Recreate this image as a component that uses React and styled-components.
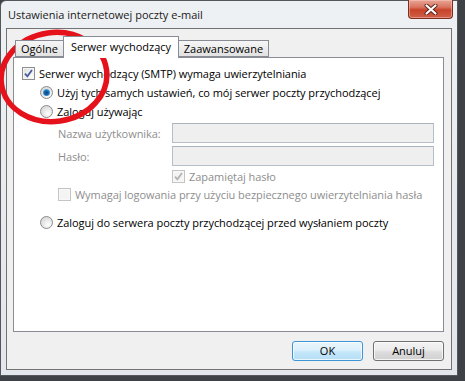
import React from 'react';
import styled, { createGlobalStyle } from 'styled-components';

const GlobalStyle = createGlobalStyle`
  html, body {
    margin: 0;
    padding: 0;
  }
  body {
    width: 465px;
    height: 381px;
    overflow: hidden;
    background: #3e4145;
    font-family: "Open Sans", "Noto Sans", sans-serif;
    font-size: 11px;
  }
`;

const Screen = styled.div`
  position: relative;
  width: 465px;
  height: 381px;
`;

const Window = styled.div`
  width: 458px;
  height: 376px;
  box-sizing: border-box;
  border: 1px solid #53575c;
  border-top-left-radius: 6px;
  background: linear-gradient(to bottom, #eef1f4 0%, #e6eaee 60%, #e3e7eb 100%);
  display: flex;
  flex-direction: column;
`;

const TitleBar = styled.div`
  height: 27px;
  display: flex;
  align-items: flex-start;
  justify-content: space-between;
`;

const Title = styled.span`
  padding: 7px 0 0 7px;
  line-height: 14px;
  font-size: 11px;
  color: #1a1a1a;
`;

const CloseButton = styled.div`
  width: 45px;
  height: 19px;
  box-sizing: border-box;
  margin: -1px 4px 0 0;
  border: 1px solid #7d2c20;
  border-top: none;
  border-radius: 0 0 4px 4px;
  background: linear-gradient(to bottom, #e8a596 0%, #d9735f 40%, #c8432a 55%, #cf6048 100%);
  box-shadow: inset 0 0 0 1px rgba(255, 210, 200, 0.45);
  display: flex;
  align-items: center;
  justify-content: center;
`;

const Client = styled.div`
  flex: 1;
  margin: 0 5px 5px 5px;
  border: 1px solid #737373;
  background: #f0f0f0;
  padding: 7px 7px 8px 6px;
  display: flex;
  flex-direction: column;
`;

const TabRow = styled.div`
  height: 21px;
  display: flex;
  align-items: flex-end;
  padding-left: 2px;
`;

const Tab = styled.div`
  position: relative;
  box-sizing: border-box;
  width: ${p => p.$w}px;
  height: ${p => (p.$active ? 22 : 17)}px;
  margin-bottom: ${p => (p.$active ? -1 : 0)}px;
  margin-left: ${p => (p.$first ? 0 : -1)}px;
  z-index: ${p => (p.$active ? 2 : 1)};
  border: 1px solid #898c95;
  border-bottom: ${p => (p.$active ? 'none' : '1px solid #898c95')};
  background: ${p => (p.$active ? '#ffffff' : 'linear-gradient(to bottom, #f6f6f6 0%, #ececec 50%, #e2e2e2 100%)')};
  display: flex;
  align-items: ${p => (p.$active ? 'flex-start' : 'center')};
  justify-content: center;
  padding-top: ${p => (p.$active ? 3 : 0)}px;
  color: #000;
  line-height: 14px;
`;

const Panel = styled.div`
  height: 275px;
  box-sizing: border-box;
  border: 1px solid #898c95;
  background: #ffffff;
  display: flex;
  flex-direction: column;
`;

const Row = styled.div`
  display: flex;
  align-items: center;
  gap: 4px;
  height: ${p => p.$h || 13}px;
  margin-top: ${p => p.$top}px;
  padding-left: ${p => p.$indent}px;
  color: ${p => (p.$disabled ? '#8e8e8e' : '#000000')};
  line-height: 13px;
  letter-spacing: -0.05px;
  white-space: nowrap;
`;

const Box = styled.span`
  width: 13px;
  height: 13px;
  box-sizing: border-box;
  flex: none;
  border: 1px solid ${p => (p.$disabled ? '#c4c4c4' : '#8e8f8f')};
  background: ${p => (p.$disabled
    ? '#f4f4f4'
    : 'linear-gradient(135deg, #dcdcdc 0%, #f0f0f0 50%, #ffffff 100%)')};
  box-shadow: inset 0 0 0 1px ${p => (p.$disabled ? '#f8f8f8' : '#f4f4f4')};
  display: flex;
  align-items: center;
  justify-content: center;
`;

const RadioOuter = styled.span`
  width: 13px;
  height: 13px;
  box-sizing: border-box;
  flex: none;
  border-radius: 50%;
  border: 1px solid #8b8b8b;
  background: radial-gradient(circle at 65% 70%, #ffffff 0%, #e8e8e8 45%, #cfcfcf 100%);
  display: flex;
  align-items: center;
  justify-content: center;
`;

const RadioDot = styled.span`
  width: 7px;
  height: 7px;
  border-radius: 50%;
  background: radial-gradient(circle at 50% 55%, #0b3f73 0%, #1c6fb5 45%, #6fc0ef 80%, #b6e2f8 100%);
`;

const FieldLabel = styled.span`
  width: 114px;
  flex: none;
`;

const TextField = styled.div`
  width: 262px;
  height: 20px;
  box-sizing: border-box;
  border: 1px solid #b4bfca;
  border-top-color: #a9b3be;
  background: #efeff0;
  margin-left: -4px;
`;

const ButtonRow = styled.div`
  display: flex;
  justify-content: flex-end;
  gap: 10px;
  margin-top: 9px;
`;

const Button = styled.div`
  width: 71px;
  height: 20px;
  box-sizing: border-box;
  border-radius: 3px;
  border: 1px solid ${p => (p.$default ? '#3d95d6' : '#707070')};
  background: ${p => (p.$default
    ? 'linear-gradient(to bottom, #e9f5fc 0%, #dcf0fb 45%, #c5e7f9 55%, #b4def6 100%)'
    : 'linear-gradient(to bottom, #f3f3f3 0%, #ebebeb 45%, #dddddd 55%, #d0d0d0 100%)')};
  box-shadow: inset 0 0 0 1px rgba(255, 255, 255, 0.75);
  display: flex;
  align-items: center;
  justify-content: center;
  color: #000;
  line-height: 14px;
`;

const Overlay = styled.svg`
  position: absolute;
  left: 0;
  top: 0;
  pointer-events: none;
`;

const CloseGlyph = () => (
  <svg width="14" height="11" viewBox="0 0 14 11">
    <path d="M2.5 1.5 L11.5 9.5 M11.5 1.5 L2.5 9.5" stroke="#5a2118" strokeWidth="4" strokeLinecap="round" />
    <path d="M2.5 1.5 L11.5 9.5 M11.5 1.5 L2.5 9.5" stroke="#ffffff" strokeWidth="2.2" strokeLinecap="round" />
  </svg>
);

const CheckBox = ({ checked, disabled }) => (
  <Box $disabled={disabled}>
    {checked && (
      <svg width="9" height="9" viewBox="0 0 9 9">
        <path
          d="M1 4.6 L3.4 7.4 L8 1"
          fill="none"
          stroke={disabled ? '#b3b3b3' : '#4a5e9c'}
          strokeWidth="1.8"
        />
      </svg>
    )}
  </Box>
);

const Radio = ({ checked }) => (
  <RadioOuter>{checked && <RadioDot />}</RadioOuter>
);

export default function App() {
  return (
    <Screen>
      <GlobalStyle />
      <Window>
        <TitleBar>
          <Title>Ustawienia internetowej poczty e-mail</Title>
          <CloseButton>
            <CloseGlyph />
          </CloseButton>
        </TitleBar>
        <Client>
          <TabRow>
            <Tab $w={49} $first>Ogólne</Tab>
            <Tab $w={116} $active>Serwer wychodzący</Tab>
            <Tab $w={91}>Zaawansowane</Tab>
          </TabRow>
          <Panel>
            <Row $top={9} $indent={8}>
              <CheckBox checked />
              <span>Serwer wychodzący (SMTP) wymaga uwierzytelniania</span>
            </Row>
            <Row $top={6} $indent={26}>
              <Radio checked />
              <span>Użyj tych samych ustawień, co mój serwer poczty przychodzącej</span>
            </Row>
            <Row $top={6} $indent={26}>
              <Radio />
              <span>Zaloguj używając</span>
            </Row>
            <Row $top={5} $indent={44} $h={20} $disabled>
              <FieldLabel>Nazwa użytkownika:</FieldLabel>
              <TextField />
            </Row>
            <Row $top={3} $indent={44} $h={20} $disabled>
              <FieldLabel>Hasło:</FieldLabel>
              <TextField />
            </Row>
            <Row $top={4} $indent={158} $disabled>
              <CheckBox checked disabled />
              <span>Zapamiętaj hasło</span>
            </Row>
            <Row $top={5} $indent={44} $disabled>
              <CheckBox disabled />
              <span>Wymagaj logowania przy użyciu bezpiecznego uwierzytelniania hasła</span>
            </Row>
            <Row $top={15} $indent={26}>
              <Radio />
              <span>Zaloguj do serwera poczty przychodzącej przed wysłaniem poczty</span>
            </Row>
          </Panel>
          <ButtonRow>
            <Button $default>OK</Button>
            <Button>Anuluj</Button>
          </ButtonRow>
        </Client>
      </Window>
      <Overlay width="465" height="381" viewBox="0 0 465 381">
        <ellipse
          cx="54"
          cy="77"
          rx="53"
          ry="44.5"
          transform="rotate(-8 54 77)"
          fill="none"
          stroke="#e5121b"
          strokeWidth="5.5"
        />
      </Overlay>
    </Screen>
  );
}
